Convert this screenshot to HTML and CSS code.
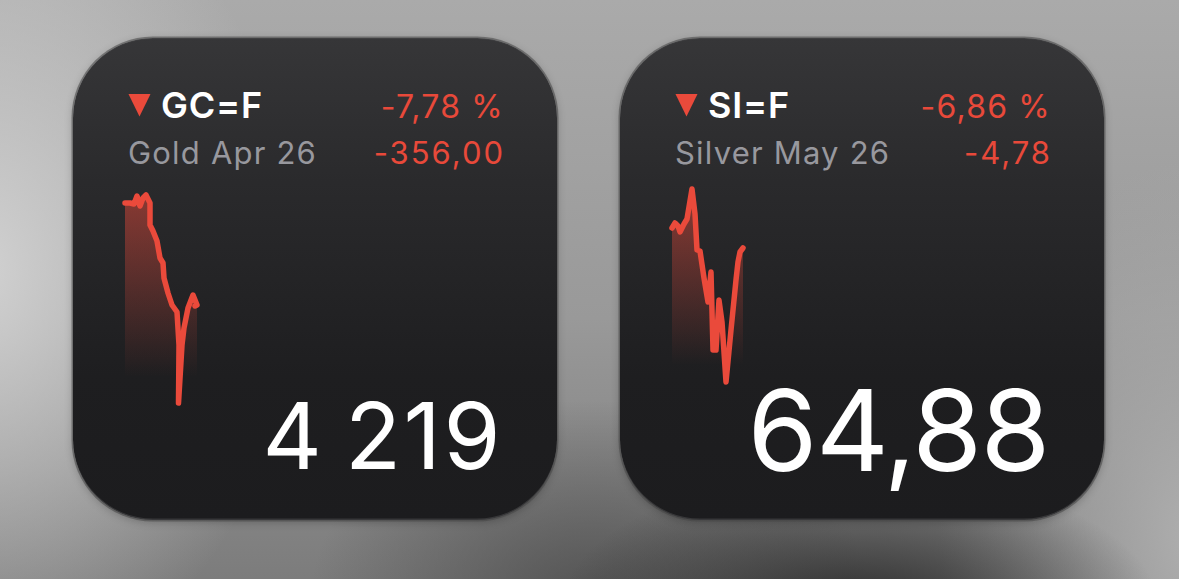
FILE: index.html
```html
<!DOCTYPE html>
<html lang="fr">
<head>
<meta charset="utf-8">
<title>Stocks widgets</title>
<link rel="stylesheet" href="styles.css">
</head>
<body>
<main class="stage">
  <section class="widget">
    <header class="row row-top">
      <span class="sym">
        <svg class="tri" viewBox="0 0 24 24" aria-hidden="true"><path d="M0.5 0.5 H23.5 L12 24 Z"/></svg>
        <span class="ticker">GC=F</span>
      </span>
      <span class="pct">-7,78 %</span>
    </header>
    <div class="row row-sub">
      <span class="name">Gold Apr 26</span>
      <span class="chg">-356,00</span>
    </div>
    <div class="body">
      <svg class="spark" width="84" height="225" viewBox="0 0 84 225" aria-hidden="true">
        <defs>
          <linearGradient id="g1" x1="0" y1="10" x2="0" y2="192" gradientUnits="userSpaceOnUse">
            <stop offset="0" stop-color="#e8493a" stop-opacity="0.5"/>
            <stop offset="1" stop-color="#e8493a" stop-opacity="0"/>
          </linearGradient>
        </defs>
        <path class="area" fill="url(#g1)" d="M5 18 L10 18 L14 19 L17 11 L20 21 L23 13 L26 10 L30 18 L30 40 L33 46 L37 56 L40 73 L43 78 L44 93 L48 108 L52 120 L57 127 L59 160 L58.5 218 L62 160 L64 143 L68 123 L73 110 L77 120 L77 200 L5 200 Z"/>
        <path class="line" d="M5 18 L10 18 L14 19 L17 11 L20 21 L23 13 L26 10 L30 18 L30 40 L33 46 L37 56 L40 73 L43 78 L44 93 L48 108 L52 120 L57 127 L59 160 L58.5 218 L62 160 L64 143 L68 123 L73 110 L77 120 L75 121"/>
      </svg>
      <div class="price price-a">4&nbsp;219</div>
    </div>
  </section>

  <section class="widget">
    <header class="row row-top">
      <span class="sym">
        <svg class="tri" viewBox="0 0 24 24" aria-hidden="true"><path d="M0.5 0.5 H23.5 L12 24 Z"/></svg>
        <span class="ticker">SI=F</span>
      </span>
      <span class="pct">-6,86 %</span>
    </header>
    <div class="row row-sub">
      <span class="name">Silver May 26</span>
      <span class="chg">-4,78</span>
    </div>
    <div class="body">
      <svg class="spark" width="84" height="225" viewBox="0 0 84 225" aria-hidden="true">
        <defs>
          <linearGradient id="g2" x1="0" y1="10" x2="0" y2="180" gradientUnits="userSpaceOnUse">
            <stop offset="0" stop-color="#e8493a" stop-opacity="0.5"/>
            <stop offset="1" stop-color="#e8493a" stop-opacity="0"/>
          </linearGradient>
        </defs>
        <path class="area" fill="url(#g2)" d="M5 43 L8 38 L11 41 L13 47 L17 39 L20 34 L25 4 L28 29 L30 65 L33 66 L37 93 L41 117 L44 87 L46 165 L49 165 L52 115 L55 137 L59 197 L64 145 L69 95 L71 77 L73 67 L76 63 L76 190 L5 190 Z"/>
        <path class="line" d="M5 43 L8 38 L11 41 L13 47 L17 39 L20 34 L25 4 L28 29 L30 65 L33 66 L37 93 L41 117 L44 87 L46 165 L49 165 L52 115 L55 137 L59 197 L64 145 L69 95 L71 77 L73 67 L76 63"/>
      </svg>
      <div class="price price-b">64,88</div>
    </div>
  </section>
</main>
</body>
</html>
```

FILE: styles.css
```css
* { box-sizing: border-box; }

html, body {
  margin: 0;
  width: 1179px;
  height: 579px;
  overflow: hidden;
}

body {
  font-family: Inter, "Noto Sans", "Liberation Sans", sans-serif;
  background:
    radial-gradient(ellipse 300px 140px at 860px 610px, rgba(40,40,40,0.95), rgba(40,40,40,0) 100%),
    radial-gradient(ellipse 280px 200px at 590px 600px, rgba(70,70,70,0.75), rgba(70,70,70,0) 100%),
    radial-gradient(ellipse 320px 420px at -20px 270px, rgba(212,212,212,0.95), rgba(212,212,212,0) 100%),
    radial-gradient(ellipse 260px 380px at 1200px 540px, rgba(178,178,178,0.95), rgba(178,178,178,0) 100%),
    linear-gradient(180deg, #aaaaaa 0%, #999999 55%, #7c7c7c 100%);
}

.stage {
  display: flex;
  gap: 63px;
  padding: 38px 0 0 73px;
}

.widget {
  width: 484px;
  height: 482px;
  border-radius: 80px;
  background: linear-gradient(180deg, #363638 0%, #2a2a2c 30%, #1e1e20 70%, #1c1c1e 100%);
  box-shadow:
    0 0 0 1.5px rgba(70,70,70,0.55),
    0 2px 8px rgba(0,0,0,0.25),
    inset 0 -1.5px 0 rgba(255,255,255,0.12),
    inset 0 1px 0 rgba(255,255,255,0.05);
  padding: 47px 54px 0 55px;
  display: flex;
  flex-direction: column;
}

.row {
  display: flex;
  justify-content: space-between;
  align-items: baseline;
}

.row-top {
  height: 40px;
  line-height: 40px;
}

.sym {
  display: flex;
  align-items: center;
  gap: 10px;
  align-self: center;
}

.tri {
  width: 23px;
  height: 24px;
  fill: #ea4a3b;
  flex: none;
}

.ticker {
  color: #ffffff;
  font-size: 36px;
  font-weight: 600;
  letter-spacing: 0.8px;
}

.pct {
  color: #e8493a;
  font-size: 32px;
  font-weight: 400;
  letter-spacing: 1.2px;
  line-height: 40px;
  padding-top: 2px;
  margin-right: -1px;
}

.row-sub {
  margin-top: 10px;
  height: 36px;
  line-height: 36px;
}

.name {
  color: #98989e;
  font-size: 31px;
  letter-spacing: 1.2px;
}

.chg {
  color: #e8493a;
  font-size: 31px;
  letter-spacing: 2px;
  margin-right: -2px;
}

.body {
  flex: 1;
  display: grid;
  grid-template: 1fr / 1fr;
}

.spark {
  grid-area: 1 / 1;
  align-self: start;
  justify-self: start;
  margin: 14px 0 0 -8px;
  overflow: visible;
}

.spark .line {
  fill: none;
  stroke: #ea4a3b;
  stroke-width: 5.5;
  stroke-linejoin: round;
  stroke-linecap: round;
}

.price {
  grid-area: 1 / 1;
  align-self: end;
  justify-self: end;
  color: #ffffff;
  font-weight: 400;
  line-height: 1;
}

.price-a {
  font-size: 92px;
  margin-bottom: 38px;
  letter-spacing: 2.5px;
  word-spacing: -8px;
  margin-right: 0;
}

.price-b {
  font-size: 113px;
  margin-bottom: 33px;
  letter-spacing: -1.5px;
  margin-right: 1px;
}
```
